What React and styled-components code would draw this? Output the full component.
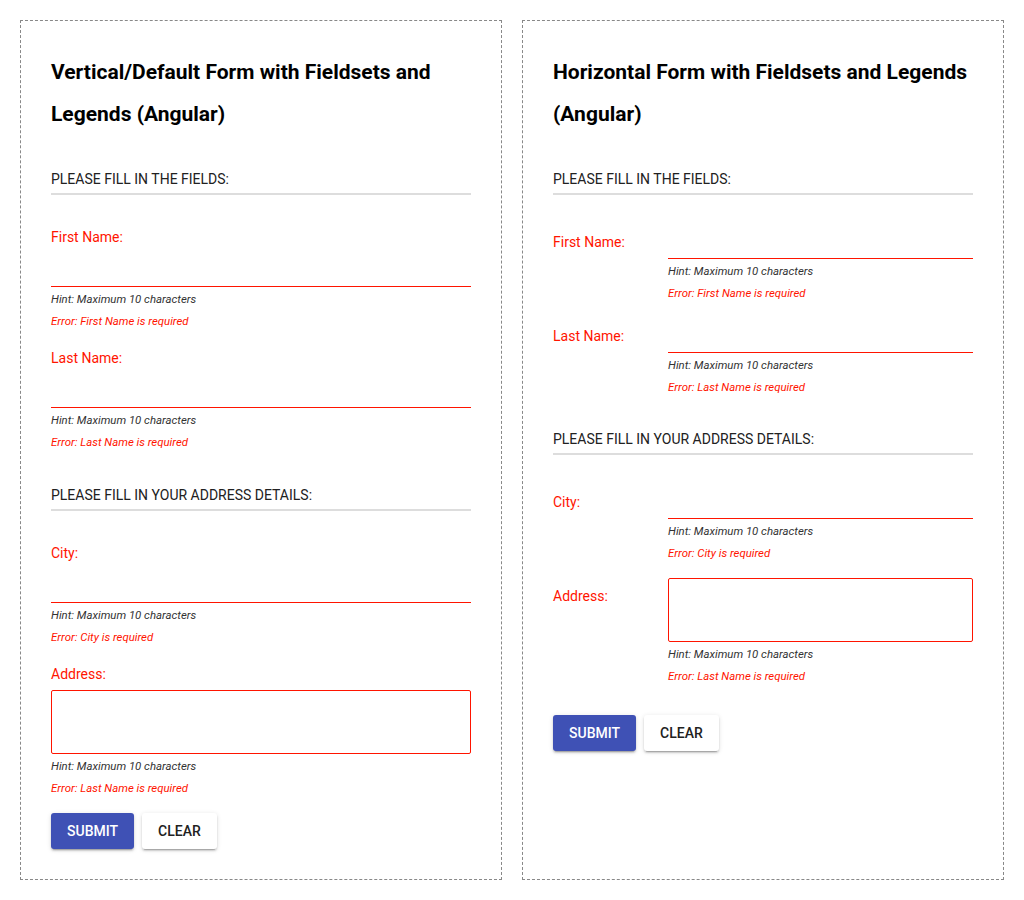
import React from "react";
import styled, { createGlobalStyle, css } from "styled-components";

const ERROR = "#ff1400";

const GlobalStyle = createGlobalStyle`
  html, body {
    margin: 0;
    padding: 0;
    background: #fff;
  }
  body {
    font-family: Roboto, "Liberation Sans", sans-serif;
    color: #212121;
  }
`;

const fieldsets = [
  {
    legend: "Please fill in the fields:",
    fields: [
      { label: "First Name:", error: "Error: First Name is required" },
      { label: "Last Name:", error: "Error: Last Name is required" },
    ],
  },
  {
    legend: "Please fill in your address details:",
    fields: [
      { label: "City:", error: "Error: City is required" },
      { label: "Address:", error: "Error: Last Name is required", multiline: true },
    ],
  },
];

const FormCard = ({ title, horizontal }) => {
  return (
    <Card>
      <Title>{title}</Title>
      <form onSubmit={(e) => e.preventDefault()}>
        {fieldsets.map((set) => (
          <Fieldset key={set.legend} $horizontal={horizontal}>
            <Legend>{set.legend}</Legend>
            {set.fields.map((field) => (
              <Field key={field.label} $horizontal={horizontal}>
                <Label $horizontal={horizontal}>{field.label}</Label>
                <Control>
                  {field.multiline ? (
                    <TextArea $horizontal={horizontal} />
                  ) : (
                    <Input />
                  )}
                  <Hint>Hint: Maximum 10 characters</Hint>
                  <ErrorText>{field.error}</ErrorText>
                </Control>
              </Field>
            ))}
          </Fieldset>
        ))}
        <Actions $horizontal={horizontal}>
          <Button type="submit" $primary>
            Submit
          </Button>
          <Button type="button">Clear</Button>
        </Actions>
      </form>
    </Card>
  );
};

const App = () => {
  return (
    <>
      <GlobalStyle />
      <Page>
        <FormCard title="Vertical/Default Form with Fieldsets and Legends (Angular)" />
        <FormCard title="Horizontal Form with Fieldsets and Legends (Angular)" horizontal />
      </Page>
    </>
  );
};

const Page = styled.div`
  display: grid;
  grid-template-columns: 482px 482px;
  column-gap: 20px;
  padding: 20px;
`;

const Card = styled.section`
  border: 1px dashed #888;
  padding: 30px;
`;

const Title = styled.h2`
  margin: 0;
  font-size: 21px;
  line-height: 42px;
  font-weight: 700;
  color: #000;
`;

const Fieldset = styled.fieldset`
  margin: ${(p) => (p.$horizontal ? "31px" : "32px")} 0 0;
  padding: 0;
  border: 0;
  min-width: 0;

  &:first-of-type {
    margin-top: 34px;
  }
`;

const Legend = styled.legend`
  display: block;
  width: 100%;
  padding: 0 0 4px;
  border-bottom: 2px solid #ddd;
  font-size: 14px;
  line-height: 20px;
  text-transform: uppercase;
  color: #212121;
`;

const Field = styled.div`
  margin-top: 16px;

  &:first-of-type {
    margin-top: 32px;
  }

  ${(p) =>
    p.$horizontal &&
    css`
      display: grid;
      grid-template-columns: 115px 1fr;
      margin-top: 13px;

      &:first-of-type {
        margin-top: 28px;
      }
    `}
`;

const Label = styled.label`
  display: block;
  font-size: 14px;
  line-height: 20px;
  color: ${ERROR};
  margin-bottom: ${(p) => (p.$horizontal ? "0" : "4px")};
  padding-top: ${(p) => (p.$horizontal ? "9px" : "0")};
`;

const Control = styled.div`
  min-width: 0;
`;

const Input = styled.input`
  display: block;
  box-sizing: border-box;
  width: 100%;
  height: 36px;
  border: 0;
  border-bottom: 1px solid ${ERROR};
  outline: none;
  padding: 0;
  font: inherit;
  background: transparent;
`;

const TextArea = styled.textarea`
  display: block;
  box-sizing: border-box;
  width: 100%;
  height: 64px;
  margin-top: ${(p) => (p.$horizontal ? "1px" : "6px")};
  border: 1px solid ${ERROR};
  border-radius: 2px;
  outline: none;
  resize: none;
  font: inherit;
`;

const Hint = styled.div`
  margin-top: 1px;
  font-size: 11.4px;
  line-height: 22px;
  font-style: italic;
  color: #333;
`;

const ErrorText = styled(Hint)`
  margin-top: 0;
  color: ${ERROR};
`;

const Actions = styled.div`
  display: flex;
  gap: 8px;
  margin-top: ${(p) => (p.$horizontal ? "28px" : "14px")};
`;

const Button = styled.button`
  height: 36px;
  min-width: 64px;
  padding: 0 16px;
  border: 0;
  border-radius: 3px;
  font-family: Roboto, "Liberation Sans", sans-serif;
  font-size: 14px;
  font-weight: 500;
  text-transform: uppercase;
  cursor: pointer;
  background: ${(p) => (p.$primary ? "#3f51b5" : "#fff")};
  color: ${(p) => (p.$primary ? "#fff" : "#212121")};
  box-shadow: 0 3px 1px -2px rgba(0, 0, 0, 0.2), 0 2px 2px 0 rgba(0, 0, 0, 0.14),
    0 1px 5px 0 rgba(0, 0, 0, 0.12);
`;

export default App;
